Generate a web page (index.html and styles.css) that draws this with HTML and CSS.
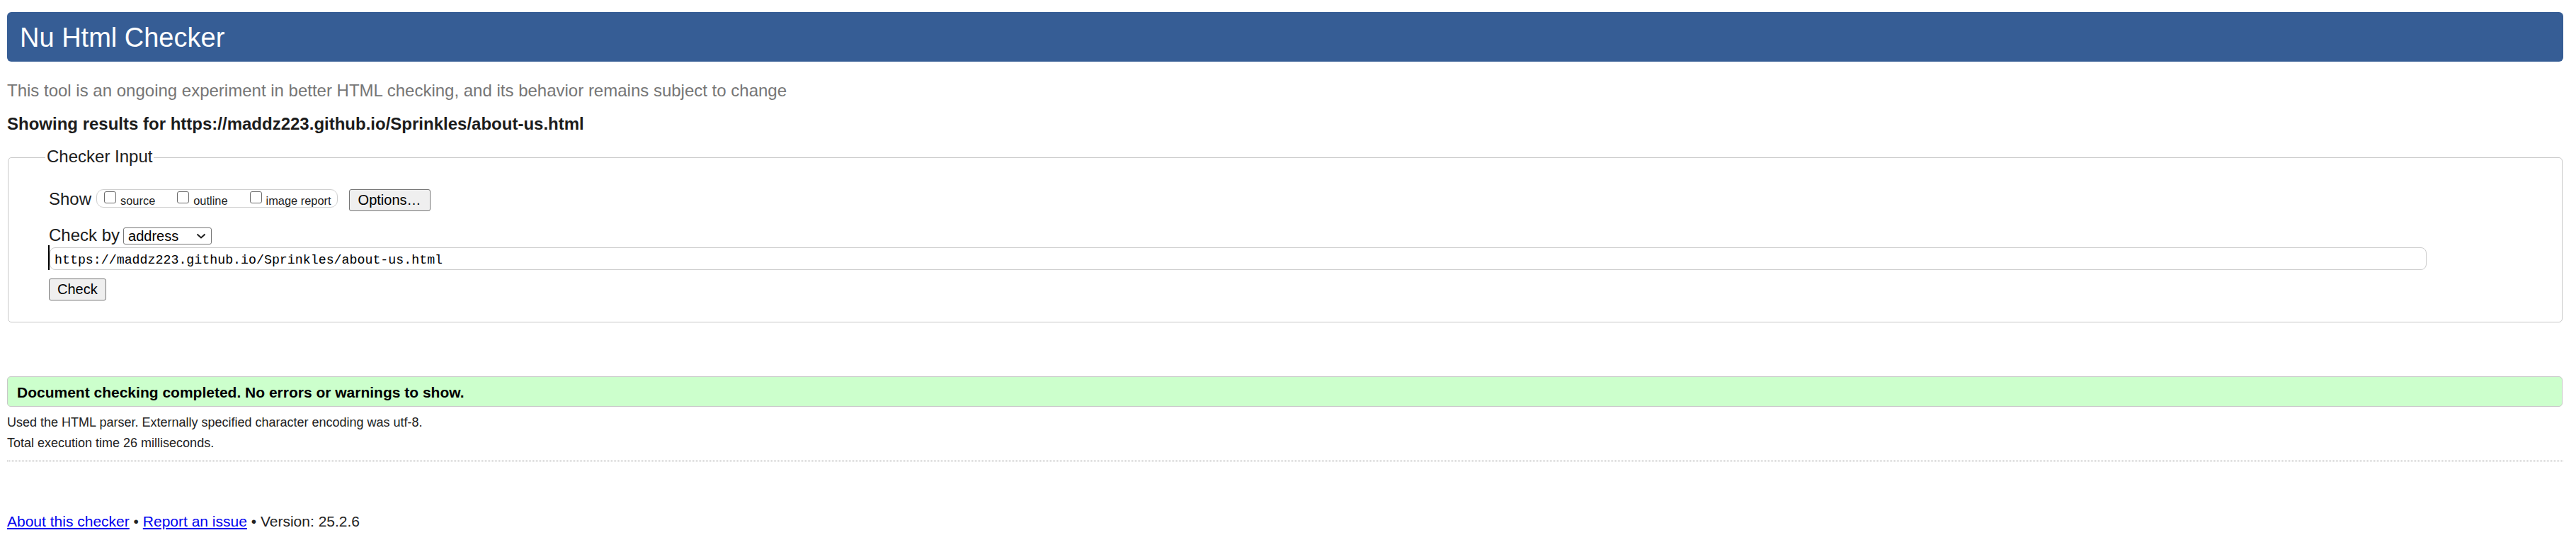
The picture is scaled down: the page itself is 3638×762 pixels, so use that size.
FILE: index.html
```html
<!DOCTYPE html>
<html lang="en">
<head>
<meta charset="utf-8">
<title>Showing results for https://maddz223.github.io/Sprinkles/about-us.html - Nu Html Checker</title>
<link rel="stylesheet" href="styles.css">
</head>
<body>
<h1 class="title">Nu Html Checker</h1>
<p class="intro">This tool is an ongoing experiment in better HTML checking, and its behavior remains subject to change</p>
<p class="showing">Showing results for https://maddz223.github.io/Sprinkles/about-us.html</p>
<form class="checker-form">
  <fieldset class="input-box">
    <legend class="legend">Checker Input</legend>
    <div class="row show-row">
      <span class="lbl">Show</span>
      <span class="opts"><label class="opt"><input type="checkbox" class="cb">source</label><label class="opt"><input type="checkbox" class="cb">outline</label><label class="opt last"><input type="checkbox" class="cb">image report</label></span>
      <button type="button" class="btn options">Options…</button>
    </div>
    <div class="row checkby-row">
      <span class="lbl">Check by</span>
      <span class="select"><span class="select-text">address</span><svg class="chev" width="14" height="8" viewBox="0 0 14 8"><polyline points="1.5,1.5 7,6.5 12.5,1.5" fill="none" stroke="#1a1a1a" stroke-width="2"/></svg></span>
    </div>
    <div class="url-wrap"><input class="url" type="url" value="https://maddz223.github.io/Sprinkles/about-us.html"></div>
    <div class="submit-row"><button type="button" class="btn check">Check</button></div>
  </fieldset>
</form>
<div class="success"><p class="success-text">Document checking completed. No errors or warnings to show.</p></div>
<p class="details first">Used the HTML parser. Externally specified character encoding was utf-8.</p>
<p class="details">Total execution time 26 milliseconds.</p>
<hr class="sep">
<p class="footer"><a class="link" href="#">About this checker</a> • <a class="link" href="#">Report an issue</a> • Version: 25.2.6</p>
</body>
</html>
```
FILE: styles.css
```css
html, body {
  background: #fff;
}
body {
  margin: 0;
  padding: 17px 18px 20px 10px;
  font-family: "Liberation Sans", Arial, sans-serif;
  color: #222;
  font-size: 24px;
}
.title {
  margin: 0;
  height: 70px;
  box-sizing: border-box;
  line-height: 72px;
  overflow: hidden;
  padding-left: 18px;
  background: #365d95;
  color: #fff;
  font-size: 38px;
  font-weight: normal;
  border-radius: 6px;
}
.intro {
  margin: 27px 0 0;
  line-height: 28px;
  font-size: 24px;
  color: #767676;
}
.showing {
  margin: 19px 0 0;
  line-height: 28px;
  font-size: 24px;
  font-weight: bold;
  color: #1c1c1c;
}
.checker-form {
  margin: 0;
}
.input-box {
  margin: 19px 1px 0 1px;
  padding: 0 57px 30px 57px;
  border: 1px solid #c8c8c8;
  border-radius: 5px;
  min-width: 0;
}
.legend {
  margin-left: -5px;
  padding: 0 2px 2px;
  font-size: 24px;
  line-height: 26px;
  color: #1c1c1c;
}
.row {
  display: flex;
  align-items: baseline;
}
.show-row {
  margin-top: 31px;
}
.lbl {
  font-size: 24px;
  line-height: 28px;
  color: #1c1c1c;
}
.opts {
  display: inline-block;
  margin-left: 7px;
  padding: 2px 8px 0 10px;
  height: 26px;
  box-sizing: border-box;
  border: 1px solid #cfcfcf;
  border-radius: 10px;
  font-size: 16.4px;
  line-height: 23px;
  color: #1c1c1c;
  white-space: nowrap;
}
.opt {
  margin-right: 31px;
}
.opt.last {
  margin-right: 0;
}
.cb {
  -webkit-appearance: none;
  appearance: none;
  display: inline-block;
  width: 17px;
  height: 17px;
  box-sizing: border-box;
  margin: 0 6px 2px 0;
  border: 1px solid #6b6b6b;
  border-radius: 3px;
  background: #fff;
  vertical-align: baseline;
}
.btn {
  font-family: "Liberation Sans", Arial, sans-serif;
  font-size: 20px;
  color: #000;
  background: #efefef;
  border: 1px solid #767676;
  border-radius: 3px;
  height: 31px;
  box-sizing: border-box;
  padding: 0 11px;
}
.options {
  margin-left: 16px;
  padding: 0 12px;
}
.checkby-row {
  margin-top: 20px;
}
.select {
  display: inline-flex;
  align-items: center;
  justify-content: space-between;
  margin-left: 5px;
  width: 125px;
  height: 24px;
  box-sizing: border-box;
  padding: 0 7px 0 6px;
  border: 1px solid #767676;
  border-radius: 3px;
  background: #fff;
  font-size: 20px;
  line-height: 22px;
  color: #000;
}
.chev {
  display: block;
}
.url-wrap {
  margin-left: -1px;
  padding-top: 3px;
  border-left: 2px solid #000;
}
.url {
  display: block;
  margin: 0;
  width: 3357px;
  height: 32px;
  box-sizing: border-box;
  padding: 4px 6px 0;
  border: 1px solid #cccccc;
  border-radius: 8px;
  font-family: "Liberation Mono", "DejaVu Sans Mono", monospace;
  font-size: 18.27px;
  color: #000;
  background: #fff;
  outline: none;
}
.submit-row {
  margin-top: 12px;
}
.success {
  margin: 76px 1px 0 0;
  height: 43px;
  box-sizing: border-box;
  padding: 10px 13px 0;
  background: #ccffcc;
  border: 1px solid #c8c8c8;
  border-radius: 5px;
}
.success-text {
  margin: 0;
  font-size: 21px;
  line-height: 24px;
  font-weight: bold;
  color: #000;
}
.details {
  margin: 7px 0 0;
  font-size: 18px;
  line-height: 22px;
  color: #222;
}
.details.first {
  margin-top: 11px;
}
.sep {
  margin: 14px 0 0;
  height: 0;
  border: 0;
  border-top: 1px dotted #8a8a8a;
}
.footer {
  margin: 73px 0 0;
  font-size: 21px;
  line-height: 24px;
  color: #222;
}
.link {
  color: #0000ee;
}
```
